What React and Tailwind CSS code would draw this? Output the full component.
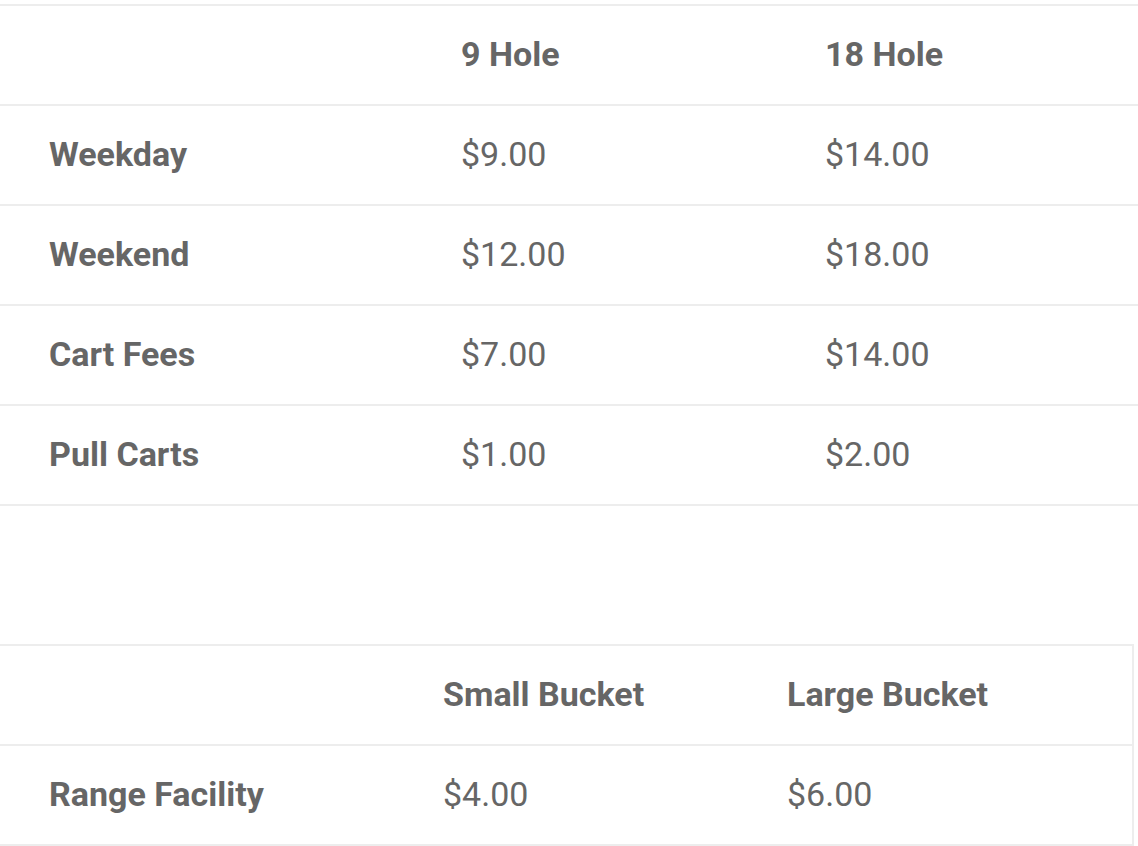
import React from 'react'

const greens = [
  { label: 'Weekday', nine: '$9.00', eighteen: '$14.00' },
  { label: 'Weekend', nine: '$12.00', eighteen: '$18.00' },
  { label: 'Cart Fees', nine: '$7.00', eighteen: '$14.00' },
  { label: 'Pull Carts', nine: '$1.00', eighteen: '$2.00' },
]

const Row = ({ cols, children }) => (
  <div className={`grid h-[100px] items-center border-t-2 border-[#ededed] pb-[2px] ${cols}`}>
    {children}
  </div>
)

const App = () => {
  return (
    <div className="min-h-screen overflow-hidden bg-white pt-[4px] text-[34px] text-[#666666]" style={{ fontFamily: 'Roboto, "Liberation Sans", sans-serif' }}>
      <div className="w-[1200px] border-b-2 border-[#ededed]">
        <Row cols="grid-cols-[412px_364px_1fr]">
          <div />
          <div className="pl-[49px] font-bold">9 Hole</div>
          <div className="pl-[49px] font-bold">18 Hole</div>
        </Row>
        {greens.map((r) => (
          <Row key={r.label} cols="grid-cols-[412px_364px_1fr]">
            <div className="pl-[49px] font-bold">{r.label}</div>
            <div className="pl-[49px]">{r.nine}</div>
            <div className="pl-[49px]">{r.eighteen}</div>
          </Row>
        ))}
      </div>

      <div className="mt-[138px] w-[1134px] border-b-2 border-r-2 border-[#ededed]">
        <Row cols="grid-cols-[394px_344px_1fr]">
          <div />
          <div className="pl-[49px] font-bold">Small Bucket</div>
          <div className="pl-[49px] font-bold">Large Bucket</div>
        </Row>
        <Row cols="grid-cols-[394px_344px_1fr]">
          <div className="pl-[49px] font-bold">Range Facility</div>
          <div className="pl-[49px]">$4.00</div>
          <div className="pl-[49px]">$6.00</div>
        </Row>
      </div>
    </div>
  )
}

export default App
